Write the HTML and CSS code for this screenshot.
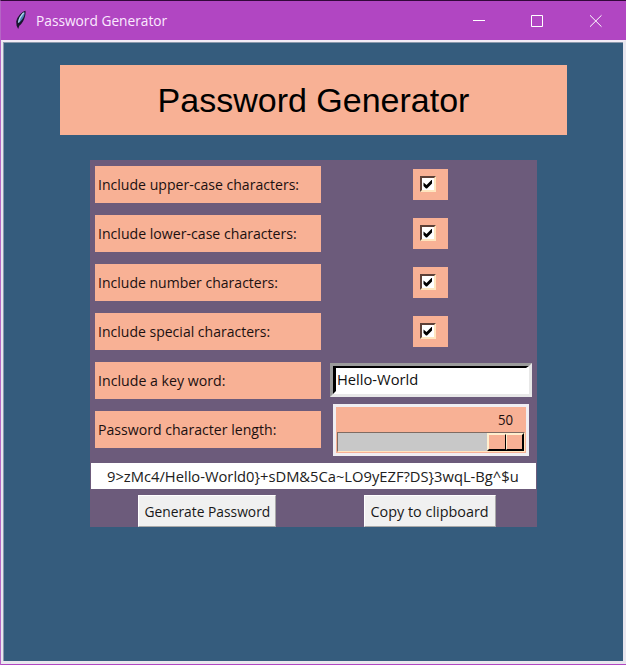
FILE: index.html
```html
<!DOCTYPE html>
<html lang="en">
<head>
<meta charset="utf-8">
<title>Password Generator</title>
<link rel="stylesheet" href="styles.css">
</head>
<body>
<div class="window">
  <header class="titlebar">
    <svg class="feather" width="12" height="20" viewBox="0 0 12 20">
      <path d="M10.5 0.7C7 1.5 2.2 6.5 1.2 11.5L1.6 15.8L3.2 19L4.3 15.8C7.8 13.6 11.2 6 10.5 0.7Z" fill="#17152b"/>
      <path d="M9.500 2C7 3.500 3.200 7.500 2.800 13.200C6.800 11.200 10.200 6 9.500 2Z" fill="#4f83bd"/>
      <path d="M8.800 2.800C6 5.500 4.200 9 3.600 12.500" stroke="#b8d5e8" stroke-width="1.300" fill="none"/>
    </svg>
    <span class="caption">Password Generator</span>
    <svg class="controls" width="128" height="14" viewBox="0 0 128 14" fill="none" stroke="#fff" stroke-width="1">
      <path d="M0 6.5H12M58.500 1.500H69.500V12.500H58.500Z"/>
      <path d="M117 1.300L128.500 12.700M128.500 1.300L117 12.700"/>
    </svg>
  </header>
  <main class="client">
    <h1 class="heading">Password Generator</h1>
    <section class="panel">
      <label class="label"><span class="t1">Include upper-case characters:</span></label>
      <div class="check"><svg viewBox="0 0 12 12"><path class="tick" d="M1.500 4.500L4.500 7L9.500 2H10V5.500L5 10.500H4L1.500 8Z"/></svg></div>
      <label class="label"><span class="t2">Include lower-case characters:</span></label>
      <div class="check"><svg viewBox="0 0 12 12"><path class="tick" d="M1.500 4.500L4.500 7L9.500 2H10V5.500L5 10.500H4L1.500 8Z"/></svg></div>
      <label class="label"><span class="t3">Include number characters:</span></label>
      <div class="check"><svg viewBox="0 0 12 12"><path class="tick" d="M1.500 4.500L4.500 7L9.500 2H10V5.500L5 10.500H4L1.500 8Z"/></svg></div>
      <label class="label"><span class="t4">Include special characters:</span></label>
      <div class="check"><svg viewBox="0 0 12 12"><path class="tick" d="M1.500 4.500L4.500 7L9.500 2H10V5.500L5 10.500H4L1.500 8Z"/></svg></div>
      <label class="label"><span class="t5">Include a key word:</span></label>
      <div class="entry"><div class="entry-inner"><span class="t6">Hello-World</span></div></div>
      <label class="label last"><span class="t7">Password character length:</span></label>
      <div class="scale">
        <div class="value"><span class="t0">50</span></div>
        <div class="trough"><div class="thumb"><i></i><i></i></div></div>
      </div>
      <div class="result"><span class="t8">9&gt;zMc4/Hello-World0}+sDM&amp;5Ca~LO9yEZF?DS}3wqL-Bg^$u</span></div>
      <button class="button generate"><span class="t9">Generate Password</span></button>
      <button class="button copy"><span class="t10">Copy to clipboard</span></button>
    </section>
  </main>
</div>
</body>
</html>
```
FILE: styles.css
```css
* { box-sizing: border-box; }
body {
  margin: 0;
  font: 15px/20px "Open Sans", "Noto Sans", sans-serif;
  color: #1c1010;
}
.window {
  width: 626px;
  height: 665px;
  display: flex;
  flex-direction: column;
  background: #b146c2;
  border-top: 1px solid #32083a;
  border-left: 1px solid #b565c5;
  padding-bottom: 1px;
  overflow: hidden;
}
.titlebar {
  height: 39px;
  flex: none;
  display: flex;
  align-items: center;
  padding: 0 25px 0 14px;
}
.feather { flex: none; margin: -2px 9px 0 0; }
.caption {
  display: inline-block;
  margin-top: -1px;
  color: #fbeaff;
  white-space: nowrap;
  transform: scaleX(.915);
  transform-origin: left center;
}
.controls { margin-left: auto; flex: none; overflow: visible; }
.client {
  flex: 1;
  background: #355c7d;
  border: 3px solid #e8e6ee;
  border-left-width: 2px;
  border-top: 2px solid #f3ecf6;
  box-shadow: inset 1px 1px 0 #8b99ac;
  display: flex;
  flex-direction: column;
  align-items: flex-start;
}
.heading {
  margin: 23px 0 25px 57px;
  width: 507px;
  height: 70px;
  background: #f8b195;
  display: flex;
  align-items: center;
  justify-content: center;
  font: 34px/40px "Liberation Sans", sans-serif;
  color: #000;
}
.panel {
  margin-left: 87px;
  width: 447px;
  height: 367px;
  background: #6c5b7b;
  display: grid;
  grid-template-columns: 235px 212px;
  grid-template-rows: repeat(5, 49px) 50px 40px 32px;
  align-items: center;
  white-space: nowrap;
}
.label {
  width: 226px;
  height: 37px;
  margin-left: 5px;
  padding: 0 0 1px 3px;
  background: #f8b195;
  display: flex;
  align-items: center;
}
.last { margin-top: -2px; }
.label span, .entry-inner span { transform-origin: left center; }
.check {
  justify-self: center;
  width: 35px;
  height: 31px;
  margin-right: 1px;
  background: #f8b195;
  padding: 7px 0 0 7px;
}
.check svg {
  display: block;
  width: 16px;
  height: 16px;
  background: #fff;
  border: 2px solid;
  border-color: #5c4037 #ffe6bf #ffe6bf #5c4037;
}
.tick { fill: #000; }
.entry {
  width: 202px;
  height: 34px;
  margin: -2px 0 0 5px;
  border: 3px solid;
  border-color: #9b9b9b #e8e8e8 #e8e8e8 #9b9b9b;
}
.entry-inner {
  height: 28px;
  border: 3px solid;
  border-width: 2px 3px 3px;
  border-color: #000 #fff #fff #000;
  background: #fff;
  display: flex;
  align-items: center;
  padding-left: 1px;
  color: #101010;
}
.scale {
  width: 196px;
  height: 52px;
  margin-left: 8px;
  background: #f8b195;
  border: 3px solid #f0eef2;
  padding: 2px 1px 0;
}
.value { height: 23px; text-align: right; padding-right: 12px; }
.value span { transform-origin: right center; }
.trough {
  height: 20px;
  border: 1px solid;
  border-color: #806b62 #ffe6bf #ffe6bf #806b62;
  background: #c8c8c8;
  display: flex;
  justify-content: flex-end;
}
.thumb {
  width: 37px;
  height: 18px;
  display: flex;
  border: 1px solid;
  border-color: #ffefcf #000 #000 #ffefcf;
}
.thumb i {
  flex: 1;
  background: #f8b195;
  border: 1px solid;
  border-color: #ffefcf #000 #000 #ffefcf;
}
.result {
  grid-column: 1 / 3;
  width: 445px;
  height: 26px;
  margin: 2px 0 0 1px;
  padding: 0 2px 1px 0;
  background: #fff;
  display: flex;
  align-items: center;
  justify-content: center;
  color: #202020;
}
.button {
  height: 32px;
  padding: 0;
  font: inherit;
  color: #181818;
  background: #f0f0f0;
  border: 1px solid;
  border-color: #fff #a8a8a8 #a8a8a8 #fff;
  display: flex;
  align-items: center;
  justify-content: center;
}
.generate { width: 138px; margin-left: 48px; }
.copy { width: 132px; margin-left: 39px; }

/* Condensed text */
.t0, .t1, .t2, .t3, .t4, .t5, .t6, .t7, .t8, .t9, .t10 { display: inline-block; }
.t0 { transform: scaleX(.88); }
.t1 { transform: scaleX(.938); }
.t2 { transform: scaleX(.941); }
.t3 { transform: scaleX(.935); }
.t4 { transform: scaleX(.935); }
.t5 { transform: scaleX(.945); }
.t6 { transform: scaleX(.98); }
.t7 { transform: scaleX(.94); }
.t8 { transform: scaleX(.981); }
.t9 { transform: scaleX(.92); }
.t10 { transform: scaleX(.96); }
```
